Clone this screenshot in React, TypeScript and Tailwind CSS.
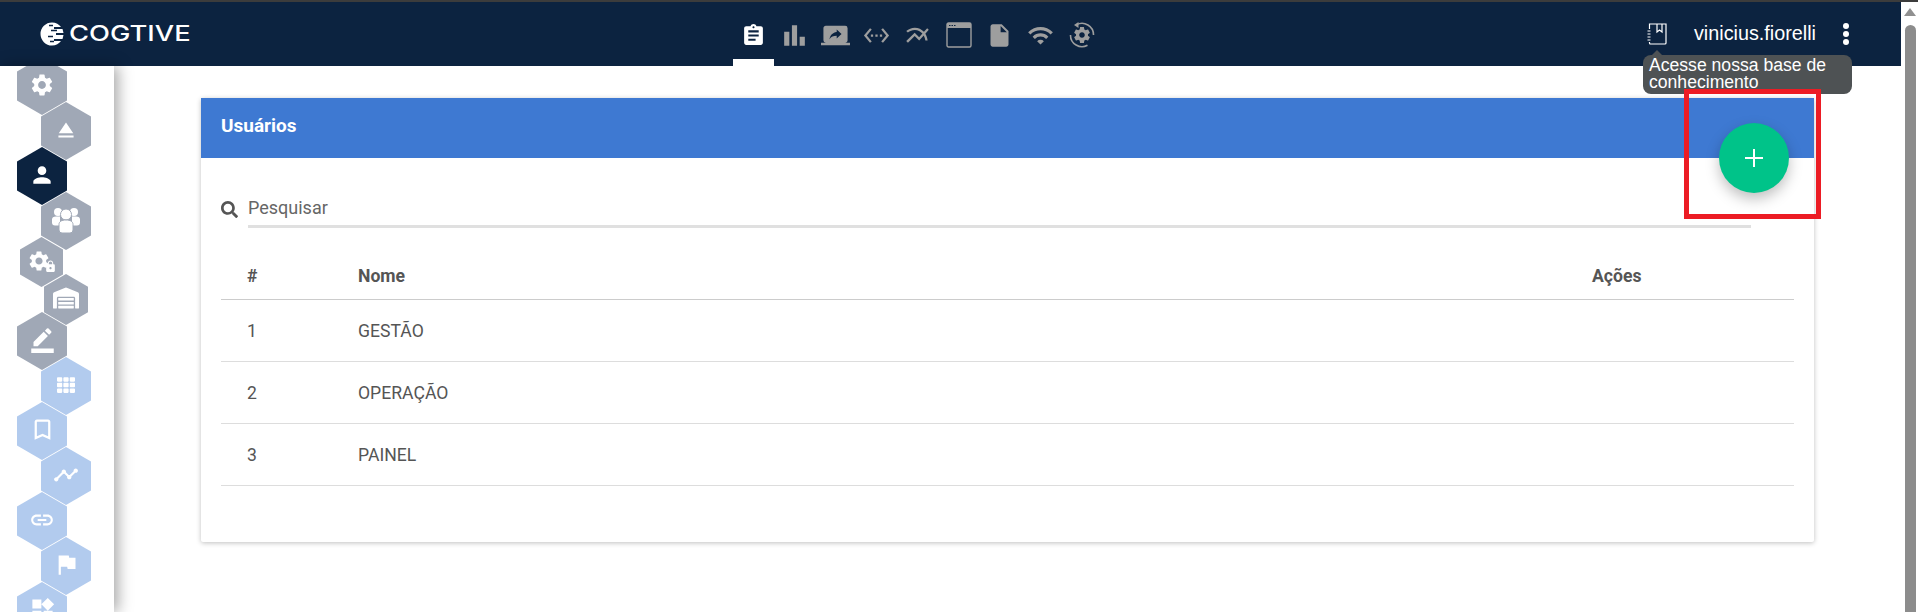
import React from "react";
import {
  MdAssignment,
  MdBarChart,
  MdScreenShare,
  MdSettingsEthernet,
  MdMultilineChart,
  MdInsertDriveFile,
  MdWifi,
  MdSettings,
  MdEject,
  MdPerson,
  MdBorderColor,
  MdBookmarkBorder,
  MdTimeline,
  MdLink,
  MdFlag,
  MdWidgets,
  MdLock,
} from "react-icons/md";
import { FaTh, FaWarehouse, FaSearch } from "react-icons/fa";

const GEAR =
  "M19.43 12.98c.04-.32.07-.64.07-.98s-.03-.66-.07-.98l2.11-1.65c.19-.15.24-.42.12-.64l-2-3.46c-.12-.22-.39-.3-.61-.22l-2.49 1c-.52-.4-1.08-.73-1.69-.98l-.38-2.65C14.46 2.18 14.25 2 14 2h-4c-.25 0-.46.18-.49.42l-.38 2.65c-.61.25-1.17.59-1.69.98l-2.49-1c-.23-.09-.49 0-.61.22l-2 3.46c-.13.22-.07.49.12.64l2.11 1.65c-.04.32-.07.65-.07.98s.03.66.07.98l-2.11 1.65c-.19.15-.24.42-.12.64l2 3.46c.12.22.39.3.61.22l2.49-1c.52.4 1.08.73 1.69.98l.38 2.65c.03.24.24.42.49.42h4c.25 0 .46-.18.49-.42l.38-2.65c.61-.25 1.17-.59 1.69-.98l2.49 1c.23.09.49 0 .61-.22l2-3.46c.12-.22.07-.49-.12-.64l-2.11-1.65zM12 15.5c-1.93 0-3.5-1.57-3.5-3.5s1.57-3.5 3.5-3.5 3.5 1.57 3.5 3.5-1.57 3.5-3.5 3.5z";

const Logo = () => (
  <svg width="24" height="24" viewBox="0 0 24 24" className="shrink-0">
    <path d="M12 0.5A11.5 11.5 0 1 0 12 23.5C16 23.5 19 21.5 21 19H14V17H22.5L23.5 13H16V11H23.5L22.5 7H14V5H21C19 2.5 16 0.5 12 0.5Z" fill="#fff" />
    <path d="M9 3.5h4M11 8.5h6M8 14.5h5M10 19.5h4" stroke="#0c2340" strokeWidth="1.3" />
  </svg>
);

const WindowIcon = () => (
  <svg width="26" height="26" viewBox="0 0 26 26" fill="none">
    <rect x="1" y="1" width="24" height="24" rx="1.5" stroke="#9e9e9e" strokeWidth="1.4" />
    <path d="M1 1h24v5H1z" fill="#9e9e9e" />
    <path d="M3 3.5h1.5M5.5 3.5H7M8 3.5h1.5" stroke="#0c2340" strokeWidth="1" />
  </svg>
);

const SyncGear = () => (
  <svg width="26" height="26" viewBox="0 0 26 26" fill="none">
    <g transform="translate(3.4 3.4) scale(0.8)">
      <path d={GEAR} fill="#9e9e9e" />
    </g>
    <path d="M7.5 2.8A11.5 11.5 0 0 1 24.5 13" stroke="#9e9e9e" strokeWidth="1.6" />
    <path d="M18.5 23.2A11.5 11.5 0 0 1 1.5 13" stroke="#9e9e9e" strokeWidth="1.6" />
    <path d="M9.5 0v6L5 3z" fill="#9e9e9e" />
  </svg>
);

const NotebookIcon = () => (
  <svg width="20" height="22" viewBox="0 0 20 22" fill="none" stroke="#fff" strokeWidth="1.2">
    <path d="M2.5 6V1h16.5v19a1 1 0 0 1-1 1H3.5a1 1 0 0 1-1-1v-1" />
    <path d="M10 1v8l2.5-2 2.5 2V1" />
    <path d="M0.5 8h3M0.5 11h3M0.5 14h3M0.5 17h3" />
  </svg>
);

const UsersIcon = () => (
  <svg width="28" height="27" viewBox="0 0 28 27" fill="#fff">
    <circle cx="6" cy="6" r="4" />
    <circle cx="22" cy="6" r="4" />
    <path d="M0 13.5a4 3 0 0 1 4-3h4v9H3a3 3 0 0 1-3-3ZM28 13.5a4 3 0 0 0-4-3h-4v9h5a3 3 0 0 0 3-3Z" />
    <circle cx="14" cy="8.5" r="5.5" stroke="#a0a8b6" strokeWidth="1" />
    <path d="M7 18.5c0-3 2.5-4.5 7-4.5s7 1.500 7 4.500V24a3 3 0 0 1-3 3H10a3 3 0 0 1-3-3Z" stroke="#a0a8b6" strokeWidth="1" />
  </svg>
);

const navIcons = [
  <MdAssignment size={25} color="#fff" />,
  <MdBarChart size={31} color="#9e9e9e" />,
  <MdScreenShare size={29} color="#9e9e9e" />,
  <MdSettingsEthernet size={27} color="#9e9e9e" />,
  <MdMultilineChart size={27} color="#9e9e9e" />,
  <WindowIcon />,
  <MdInsertDriveFile size={27} color="#9e9e9e" />,
  <MdWifi size={27} color="#9e9e9e" />,
  <SyncGear />,
];

const GRAY = "bg-[#a0a8b6]";
const NAVY = "bg-[#0c2340]";
const BLUE = "bg-[#b2cbee]";

const hexes = [
  { box: `w-[50px] h-[58px] -mt-[9px] ml-[17px] ${GRAY}`, icon: <MdSettings size={26} color="#fff" /> },
  { box: `w-[50px] h-[58px] -mt-[13px] ml-[41px] ${GRAY}`, icon: <MdEject size={26} color="#fff" /> },
  { box: `w-[50px] h-[58px] -mt-[13px] ml-[17px] ${NAVY}`, icon: <MdPerson size={26} color="#fff" /> },
  { box: `w-[50px] h-[58px] -mt-[13px] ml-[41px] ${GRAY}`, icon: <UsersIcon /> },
  {
    box: `w-[43px] h-[50px] -mt-[13px] ml-[20px] ${GRAY}`,
    icon: (
      <span className="flex items-end">
        <MdSettings size={24} color="#fff" />
        <MdLock size={13} color="#fff" className="-ml-[7px]" />
      </span>
    ),
  },
  { box: `w-[44px] h-[51px] -mt-[13px] ml-[44px] ${GRAY}`, icon: <FaWarehouse size={26} color="#fff" /> },
  { box: `w-[50px] h-[58px] -mt-[13px] ml-[17px] ${GRAY}`, icon: <MdBorderColor size={27} color="#fff" /> },
  { box: `w-[50px] h-[58px] -mt-[13px] ml-[41px] ${BLUE}`, icon: <FaTh size={18} color="#fff" /> },
  { box: `w-[50px] h-[58px] -mt-[13px] ml-[17px] ${BLUE}`, icon: <MdBookmarkBorder size={27} color="#fff" /> },
  { box: `w-[50px] h-[58px] -mt-[13px] ml-[41px] ${BLUE}`, icon: <MdTimeline size={26} color="#fff" /> },
  { box: `w-[50px] h-[58px] -mt-[13px] ml-[17px] ${BLUE}`, icon: <MdLink size={26} color="#fff" /> },
  { box: `w-[50px] h-[58px] -mt-[13px] ml-[41px] ${BLUE}`, icon: <MdFlag size={27} color="#fff" /> },
  { box: `w-[50px] h-[58px] -mt-[13px] ml-[17px] ${BLUE}`, icon: <MdWidgets size={27} color="#fff" /> },
];

const rows = [
  { id: 1, name: "GESTÃO" },
  { id: 2, name: "OPERAÇÃO" },
  { id: 3, name: "PAINEL" },
];

const App: React.FC = () => {
  return (
    <div className="relative h-[612px] w-full overflow-hidden bg-white font-['Roboto',sans-serif] flex flex-col">
      <div className="h-[2px] bg-[#3c3c3c] shrink-0" />
      <div className="flex flex-1 min-h-0">
        <div className="flex-1 min-w-0 flex flex-col">
          {/* top bar */}
          <header className="h-[64px] shrink-0 bg-[#0c2340] flex">
            <div className="w-[733px] shrink-0 pl-[40px] pt-[20px] flex items-start">
              <Logo />
              <span className="ml-[5px] font-['Inter',sans-serif] text-[21px] leading-[24px] font-medium text-white origin-left scale-x-[1.3] inline-block">
                COGTIVE
              </span>
            </div>
            <nav className="flex">
              {navIcons.map((icon, i) => (
                <div
                  key={i}
                  className={`w-[41px] h-[64px] flex items-center justify-center pt-[9px] ${
                    i === 0 ? "border-b-[7px] border-white" : "border-b-[7px] border-transparent"
                  }`}
                >
                  {icon}
                </div>
              ))}
            </nav>
            <div className="ml-auto flex items-center pr-[52px] text-white">
              <NotebookIcon />
              <span className="ml-[27px] font-['Liberation_Sans',sans-serif] text-[19.8px]">vinicius.fiorelli</span>
              <span className="ml-[27px] flex flex-col gap-[2px]">
                <i className="block w-[6px] h-[6px] rounded-full bg-white" />
                <i className="block w-[6px] h-[6px] rounded-full bg-white" />
                <i className="block w-[6px] h-[6px] rounded-full bg-white" />
              </span>
            </div>
          </header>

          <div className="flex flex-1 min-h-0">
            {/* hexagon menu */}
            <aside className="w-[114px] shrink-0 overflow-hidden bg-white shadow-[4px_0_14px_rgba(0,0,0,0.35)] flex flex-col">
              {hexes.map((hex, i) => (
                <div
                  key={i}
                  className={`${hex.box} shrink-0 flex items-center justify-center pb-[3px] [clip-path:polygon(50%_0,100%_25%,100%_75%,50%_100%,0_75%,0_25%)]`}
                >
                  {hex.icon}
                </div>
              ))}
            </aside>

            <main className="flex-1 min-w-0 pt-[32px] pl-[87px] pr-[87px]">
              <section className="relative h-[444px] bg-white rounded-[2px] shadow-[0_1px_5px_rgba(0,0,0,0.25)]">
                <div className="h-[60px] bg-[#3e79d2] pl-[20px] pb-[4px] flex items-center text-white text-[19px] font-bold">
                  Usuários
                </div>
                <div className="px-[20px]">
                  <div className="mt-[32px] flex items-start">
                    <FaSearch size={17} color="#555" className="mt-[11px]" />
                    <div className="ml-[10px] w-[1503px] h-[38px] border-b-[3px] border-[#e0e0e0] flex items-center text-[18px] text-[#666]">
                      Pesquisar
                    </div>
                  </div>
                  <table className="mt-[25px] w-full table-fixed text-left text-[#555] text-[17.6px]">
                    <colgroup>
                      <col className="w-[111px]" />
                      <col />
                      <col className="w-[228px]" />
                    </colgroup>
                    <thead>
                      <tr className="h-[46px] border-b border-[#cccccc]">
                        <th className="pl-[26px] font-bold">#</th>
                        <th className="pl-[26px] font-bold">Nome</th>
                        <th className="pl-[26px] font-bold">Ações</th>
                      </tr>
                    </thead>
                    <tbody>
                      {rows.map((row) => (
                        <tr className="h-[62px] border-b border-[#dddddd]" key={row.id}>
                          <td className="pl-[26px] pt-[2px]">{row.id}</td>
                          <td className="pl-[26px] pt-[2px]">{row.name}</td>
                          <td />
                        </tr>
                      ))}
                    </tbody>
                  </table>
                </div>
                <button className="absolute top-[25px] right-[25px] w-[70px] h-[70px] rounded-full bg-[#00c389] shadow-[0_6px_14px_rgba(0,0,0,0.25)] flex items-center justify-center">
                  <svg width="20" height="20" viewBox="0 0 20 20">
                    <path d="M10 1v18M1 10h18" stroke="#fff" strokeWidth="2" />
                  </svg>
                </button>
              </section>
            </main>
          </div>
        </div>

        {/* scrollbar */}
        <div className="relative w-[17px] shrink-0 bg-white">
          <div className="mt-[6px] w-0 h-0 ml-[3px] border-x-[6px] border-x-transparent border-b-[8px] border-b-[#909090]" />
          <div className="ml-[4px] mt-[9px] w-[11px] h-[700px] rounded-t-[6px] bg-[#8c8c8c]" />
        </div>
      </div>

      {/* tooltip over the top bar */}
      <div className="absolute left-[1643px] top-[55px] w-[209px] h-[39px] rounded-[8px] bg-[#4e5254] pl-[6px] pt-[2px] font-['Liberation_Sans',sans-serif] text-[17.6px] leading-[17px] text-white">
        <span className="absolute -top-[5px] left-[9px] w-0 h-0 border-x-[5px] border-x-transparent border-b-[5px] border-b-[#4e5254]" />
        Acesse nossa base de
        <br />
        conhecimento
      </div>

      {/* red highlight */}
      <div className="absolute left-[1684px] top-[89px] w-[137px] h-[130px] border-[5px] border-[#ec1c24]" />
    </div>
  );
};

export default App;
